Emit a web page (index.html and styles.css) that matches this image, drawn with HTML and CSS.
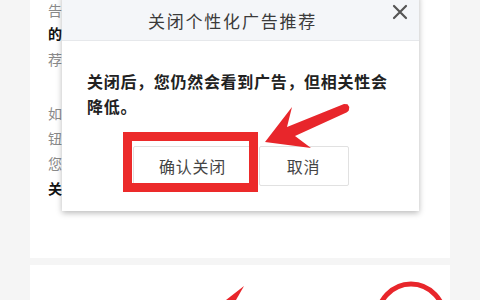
FILE: index.html
```html
<!DOCTYPE html>
<html lang="zh">
<head>
<meta charset="utf-8">
<link rel="stylesheet" href="styles.css">
</head>
<body>
<div class="page">
  <div class="column">
    <section class="card card-top">
      <div class="article">
        <p class="para para-first">
          <span class="line">告</span>
          <span class="line strong">的</span>
          <span class="line">荐</span>
        </p>
        <p class="para">
          <span class="line">如</span>
          <span class="line">钮</span>
          <span class="line">您</span>
          <span class="line strong">关</span>
        </p>
      </div>
    </section>
    <section class="card card-bottom"></section>
  </div>
</div>

<div class="dialog">
  <header class="dialog-head">
    <span class="dialog-title">关闭个性化广告推荐</span>
    <svg class="close" width="16" height="16" viewBox="0 0 16 16"><path d="M2 2 L14 14 M14 2 L2 14" stroke="#555" stroke-width="2.2" stroke-linecap="round"/></svg>
  </header>
  <div class="dialog-body">
    <p class="dialog-text">关闭后，您仍然会看到广告，但相关性会降低。</p>
    <div class="actions">
      <button class="btn btn-confirm">确认关闭</button>
      <button class="btn btn-cancel">取消</button>
    </div>
  </div>
</div>

<div class="highlight-box"></div>

<svg class="annot" width="480" height="300" viewBox="0 0 480 300">
  <polygon points="265,142 292,107 287,127 344,104 347.5,104.3 349.3,107 348.8,110.5 347,112.3 295,136 311,148" fill="#e8262b"/>
  <polygon points="244,286 226,300 236,300" fill="#e8262b"/>
  <ellipse cx="411" cy="320" rx="34" ry="36" fill="none" stroke="#e8262b" stroke-width="5"/>
</svg>
</body>
</html>
```
FILE: styles.css
```css
* { box-sizing: border-box; }
html, body { margin: 0; padding: 0; }
body {
  width: 480px;
  height: 300px;
  overflow: hidden;
  background: #f5f5f5;
  font-family: "Noto Sans CJK SC", "Noto Sans", sans-serif;
  position: relative;
}
.page {
  display: flex;
  justify-content: center;
  padding: 0 30px;
  height: 300px;
}
.column {
  width: 420px;
  display: flex;
  flex-direction: column;
  gap: 7px;
}
.card {
  background: #fff;
}
.card-top {
  height: 258px;
  padding: 0 0 0 18px;
}
.card-bottom {
  flex: 1;
}
.article {
  width: 15px;
}
.para {
  margin: 0;
}
.para-first {
  margin-bottom: 29px;
}
.line {
  display: block;
  font-size: 14px;
  line-height: 25px;
  color: #8a8a8a;
}
.para-first .line {
  line-height: 26px;
}
.para-first .line:first-child {
  line-height: 20px;
}
.line.strong {
  color: #111;
  font-weight: bold;
}

.dialog {
  position: absolute;
  left: 62px;
  top: -6px;
  width: 357px;
  background: #fff;
  box-shadow: 0 2px 6px rgba(0,0,0,0.28);
}
.dialog-head {
  height: 47px;
  padding-top: 6px;
  background: #f4f6f9;
  border-bottom: 1px solid #e6e8eb;
  display: flex;
  align-items: center;
  justify-content: center;
  position: relative;
}
.dialog-title {
  font-size: 17px;
  letter-spacing: 1.8px;
  color: #3a3a3a;
  margin-left: -16px;
}
.close {
  position: absolute;
  right: 11px;
  top: 10px;
}
.dialog-body {
  padding: 28px 25px 25px 25px;
}
.dialog-text {
  margin: 0;
  font-size: 16px;
  line-height: 25px;
  letter-spacing: 0.7px;
  font-weight: bold;
  color: #222;
}
.actions {
  margin-top: 27px;
  display: flex;
  justify-content: center;
  gap: 6px;
}
.btn {
  height: 40px;
  background: #fff;
  border: 1px solid #e1e1e1;
  border-radius: 2px;
  font-family: "Noto Sans CJK SC", "Noto Sans", sans-serif;
  font-size: 16px;
  letter-spacing: 0.7px;
  color: #444;
  padding: 0;
}
.btn-confirm { width: 120px; }
.btn-cancel { width: 90px; }

.highlight-box {
  position: absolute;
  left: 123px;
  top: 132px;
  width: 135px;
  height: 60px;
  border: 9px solid #ec2a2a;
}
.annot {
  position: absolute;
  left: 0;
  top: 0;
}
```
